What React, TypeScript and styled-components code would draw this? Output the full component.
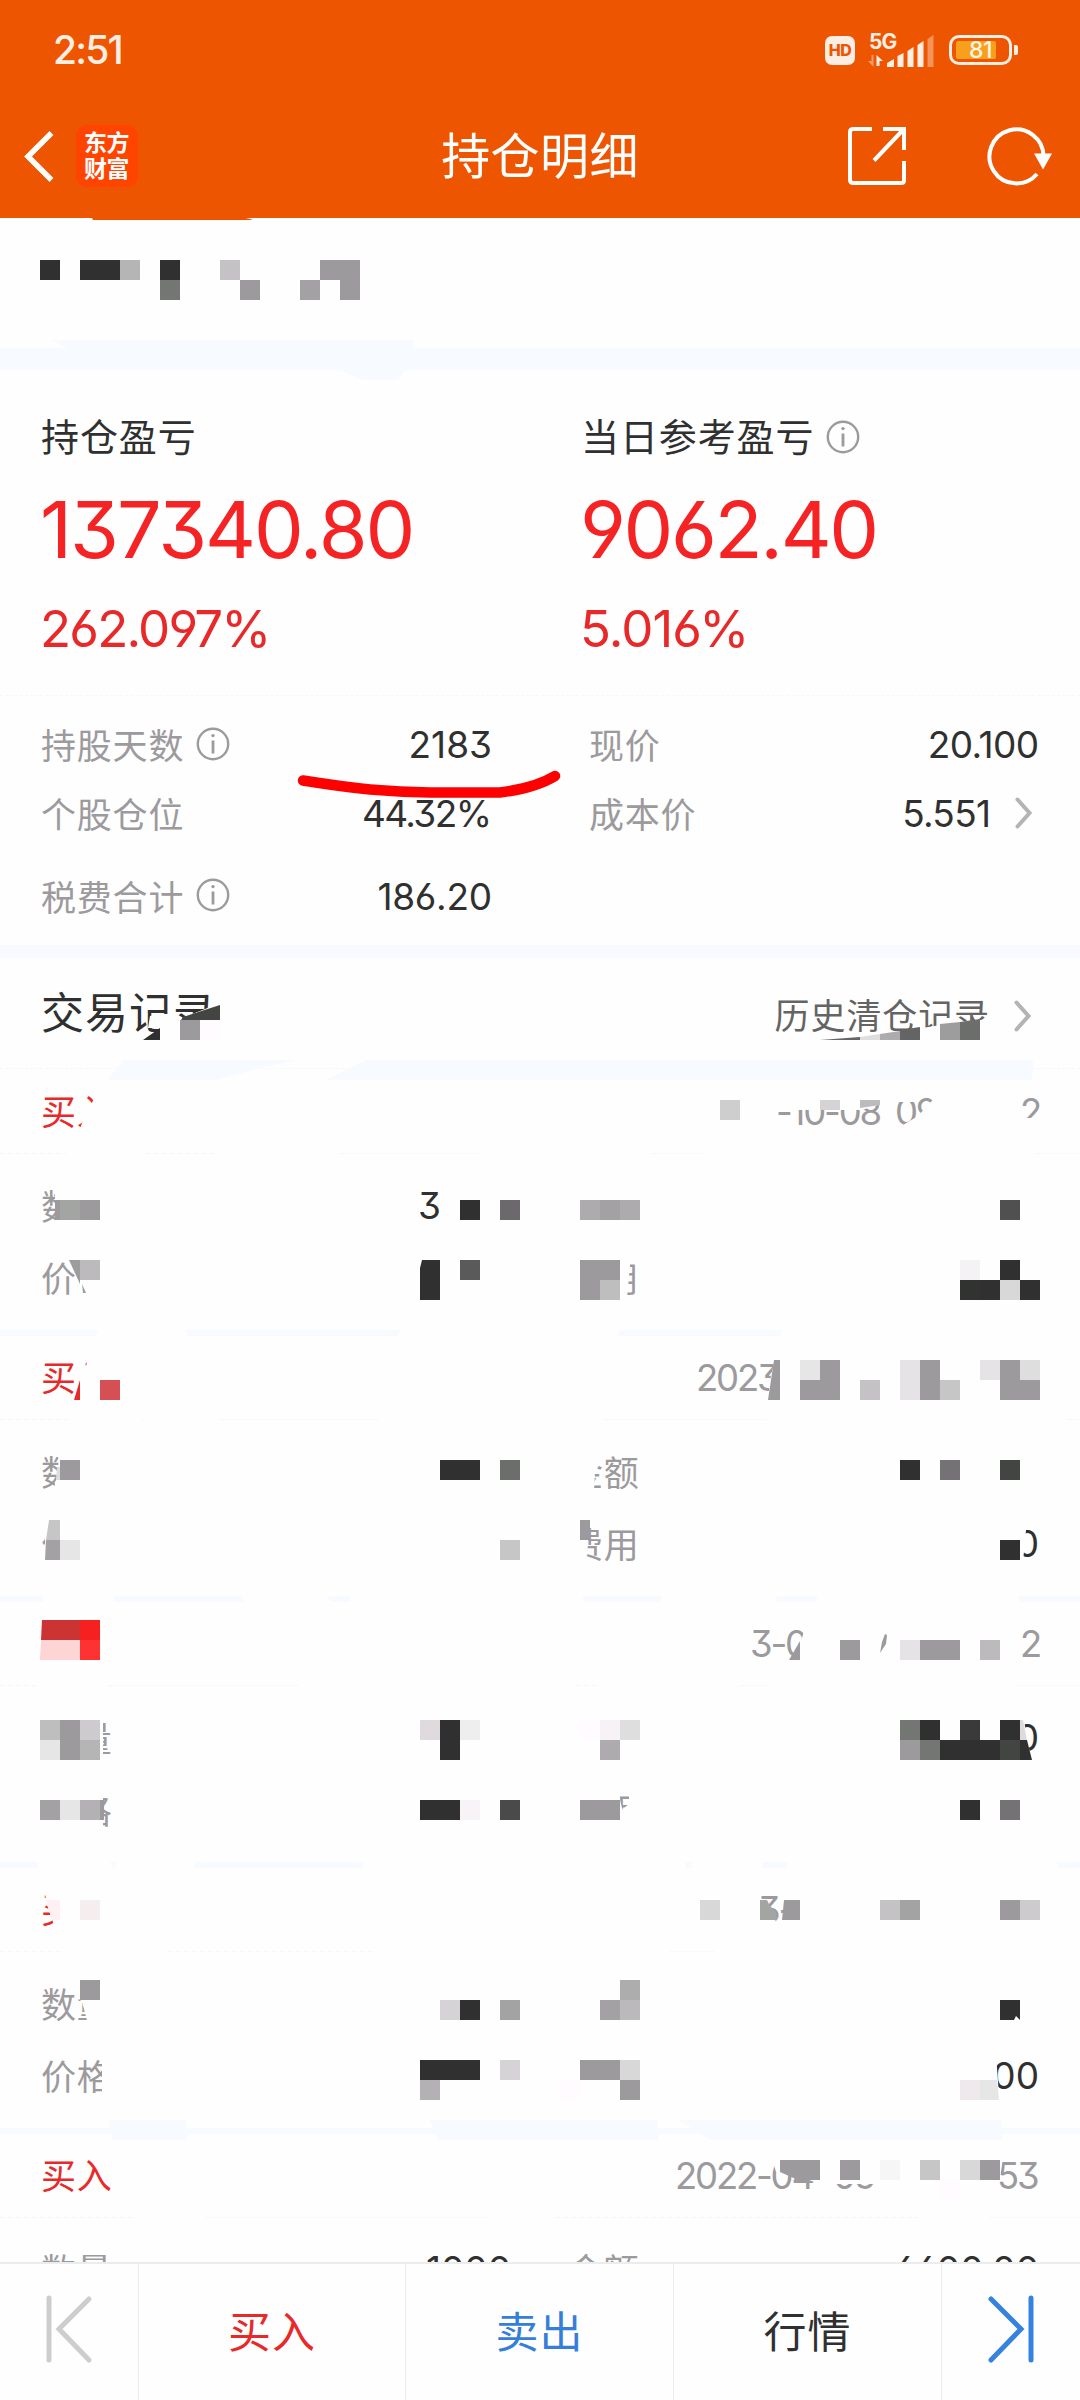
import React from "react";
import styled, { createGlobalStyle } from "styled-components";

const GREY = "#9c9a9d";
const INK = "#303030";
const RED = "#e8292a";
const PAPER = "#fefefe";
const MIST = "#f7faff";

const GlobalStyle = createGlobalStyle`
  * { box-sizing: border-box; }
  body { margin: 0; background: ${PAPER}; }
`;

const Screen = styled.div`
  display: flex;
  flex-direction: column;
  width: 1080px;
  height: 2400px;
  overflow: hidden;
  background: ${PAPER};
  color: ${INK};
  font-family: Inter, "Noto Sans CJK SC", sans-serif;
  font-feature-settings: "cv03", "cv04", "cv09";
`;

/* ---------- header ---------- */

const Header = styled.header`
  flex: none;
  height: 218px;
  background: #ed5500;
  color: #fff;
`;

const StatusBar = styled.div`
  display: flex;
  align-items: center;
  justify-content: space-between;
  height: 100px;
  padding: 0 62px 0 53px;
`;

const Clock = styled.span`
  font-size: 39px;
  line-height: 48px;
  font-weight: 500;
  letter-spacing: -1.8px;
  color: #fdeee4;
`;

const StatusIcons = styled.div`
  display: flex;
  align-items: center;
  gap: 13px;
`;

const HdBadge = styled.span`
  width: 30px;
  height: 29px;
  border-radius: 7px;
  background: #fdeee4;
  color: #ed5500;
  font-size: 16px;
  line-height: 29px;
  font-weight: 800;
  letter-spacing: -0.5px;
  text-align: center;
`;

const Signal = styled.div`
  display: flex;
  flex-direction: column;
  width: 68px;
  height: 34px;
  position: relative;
  color: #fdeee4;
`;

const Network = styled.span`
  padding-left: 1px;
  font-size: 21px;
  line-height: 17px;
  font-weight: 700;
  letter-spacing: -0.8px;
`;

const Bars = styled.svg`
  position: absolute;
  left: 0;
  top: 0;
`;

const Battery = styled.div`
  position: relative;
  display: flex;
  width: 63px;
  height: 30px;
  padding: 3px 4px;
  margin-right: 6px;
  border: 3px solid #fdeee4;
  border-radius: 10px;
  &::after {
    content: "";
    position: absolute;
    right: -9px;
    top: 7px;
    width: 4px;
    height: 10px;
    border-radius: 0 2px 2px 0;
    background: #fdeee4;
  }
`;

const Charge = styled.span`
  width: 40px;
  padding-left: 13px;
  border-radius: 2px;
  background: #f8a01c;
  color: #fff5e8;
  font-size: 23px;
  line-height: 19px;
  font-weight: 500;
  letter-spacing: -0.6px;
`;

const TitleBar = styled.div`
  display: grid;
  grid-template-columns: 1fr auto 1fr;
  align-items: center;
  height: 112px;
`;

const TitleLeft = styled.div`
  display: flex;
  align-items: center;
  gap: 19px;
  padding: 0 0 1px 21px;
`;

const TitleRight = styled.div`
  display: flex;
  align-items: center;
  justify-content: flex-end;
  gap: 80px;
  padding: 0 27px 1px 0;
`;

const Logo = styled.div`
  width: 62px;
  height: 62px;
  padding: 5px 0 0 8px;
  border-radius: 11px;
  background: #ff4400;
  font-size: 23px;
  line-height: 26px;
  font-weight: 700;
  letter-spacing: -0.5px;
`;

const Title = styled.h1`
  margin: 0;
  padding-top: 1px;
  font-size: 49px;
  line-height: 60px;
  font-weight: 400;
  letter-spacing: 0.4px;
`;

/* ---------- summary ---------- */

const Section = styled.section<{ $h: number; $pad?: number }>`
  position: relative;
  flex: none;
  height: ${(p) => p.$h}px;
  padding-top: ${(p) => p.$pad ?? 0}px;
`;

const Divider = styled.div<{ $h: number }>`
  flex: none;
  height: ${(p) => p.$h}px;
  background: ${MIST};
`;

const Overlay = styled.svg`
  position: absolute;
  left: 0;
  top: 0;
  overflow: visible;
  pointer-events: none;
`;

const ProfitGrid = styled.div`
  display: grid;
  grid-template-columns: 540px 1fr;
  height: 100%;
  padding: 43px 0 0 41px;
  border-bottom: 1px dashed #f7f7f7;
`;

const ProfitLabel = styled.div`
  display: flex;
  align-items: center;
  gap: 12px;
  height: 48px;
  font-size: 38px;
  line-height: 48px;
  letter-spacing: 0.9px;
`;

const Profit = styled.div<{ $ls: number }>`
  margin: 22px 0 0 -1px;
  font-size: 79px;
  line-height: 92px;
  letter-spacing: ${(p) => p.$ls}px;
  color: #f52323;
`;

const Percent = styled.div<{ $ls: number }>`
  margin: 23px 0 0 -1px;
  font-size: 51px;
  line-height: 61px;
  letter-spacing: ${(p) => p.$ls}px;
  color: ${RED};
`;

const FactRow = styled.div<{ $h: number }>`
  display: grid;
  grid-template-columns: 451px 97px 1fr;
  align-items: center;
  height: ${(p) => p.$h}px;
  padding: 0 41px;
  font-size: 37px;
`;

const Fact = styled.div<{ $wide?: boolean }>`
  display: flex;
  align-items: center;
  justify-content: space-between;
  grid-column: ${(p) => (p.$wide ? "3" : "1")};
`;

const FactLabel = styled.span`
  display: flex;
  align-items: center;
  gap: 12px;
  padding-bottom: 2px;
  font-size: 35px;
  letter-spacing: 0.8px;
  color: ${GREY};
`;

const Value = styled.span<{ $ls?: number }>`
  display: flex;
  align-items: center;
  letter-spacing: ${(p) => p.$ls ?? 0}px;
  margin-right: ${(p) => -(p.$ls ?? 0)}px;
`;

const Linked = styled.span`
  display: flex;
  align-items: center;
  gap: 24px;
  padding-right: 7px;
`;

/* ---------- records ---------- */

const RecordsHead = styled.div`
  display: flex;
  align-items: center;
  justify-content: space-between;
  height: 111px;
  padding: 0 49px 0 41px;
  border-bottom: 1px dashed #f7f7f7;
`;

const RecordsTitle = styled.h2`
  margin: 0;
  font-size: 43px;
  line-height: 50px;
  font-weight: 400;
  letter-spacing: 1px;
`;

const HistoryLink = styled.span`
  display: flex;
  align-items: center;
  gap: 24px;
  padding-top: 6px;
  font-size: 35px;
  line-height: 44px;
  letter-spacing: 0.9px;
  color: #646464;
`;

const RecordTop = styled.div`
  display: flex;
  align-items: center;
  justify-content: space-between;
  height: 89px;
  padding: 6px 41px 0;
`;

const Side = styled.span`
  padding-bottom: 4px;
  font-size: 35px;
  letter-spacing: 0.8px;
  color: ${RED};
`;

const Stamp = styled.span`
  display: flex;
  margin-left: auto;
  font-size: 36.5px;
  letter-spacing: -2.2px;
  color: ${GREY};
`;

const StampPart = styled.span<{ $w: number }>`
  width: ${(p) => p.$w}px;
  white-space: pre;
`;

const RecordRow = styled.div`
  display: grid;
  grid-template-columns: 470px 57px 1fr;
  align-items: center;
  height: 71.5px;
  padding: 0 41px;
  font-size: 37px;
`;

const RecordBody = styled.div`
  padding-top: 17px;
`;

const RecordsViewport = styled.div`
  flex: 1;
  min-height: 0;
  overflow: hidden;
`;

/* ---------- bottom bar ---------- */

const BottomBar = styled.nav`
  display: grid;
  grid-template-columns: 139px 267px 268px 268px 1fr;
  flex: none;
  height: 138px;
  border-top: 2px solid #ececec;
`;

const BarItem = styled.div<{ $color?: string }>`
  display: flex;
  align-items: center;
  justify-content: center;
  padding-bottom: 6px;
  font-size: 43px;
  letter-spacing: 1px;
  color: ${(p) => p.$color ?? INK};
  border-right: 1px solid #ececec;
  &:last-child {
    border-right: 0;
  }
`;

/* ---------- icons ---------- */

const Info = () => (
  <svg width="34" height="34" viewBox="0 0 34 34" fill="none" stroke={GREY} strokeWidth="2.4">
    <circle cx="17" cy="17" r="15.2" />
    <path d="M17 13.5v13" strokeWidth="2.8" />
    <circle cx="17" cy="8.6" r="1.7" fill={GREY} stroke="none" />
  </svg>
);

const Chevron = () => (
  <svg width="17" height="32" viewBox="0 0 17 32" fill="none" stroke="#b5b3b6" strokeWidth="4" strokeLinecap="round">
    <path d="M2.500 2.500L14.500 16L2.500 29.500" />
  </svg>
);

/* ---------- mosaic ---------- */

type Cell = [x: number, y: number, w: number, h: number, color: string];
type Shape = [points: string, color: string];

const Mosaic = ({
  top,
  height,
  masks = [],
  cells = [],
  shapes = [],
  dash,
  dashY = 0,
}: {
  top: number;
  height: number;
  masks?: string[];
  cells?: Cell[];
  shapes?: Shape[];
  dash?: [number, number][];
  dashY?: number;
}) => (
  <Overlay width="1080" height={height} viewBox={`0 ${top} 1080 ${height}`}>
    {dash?.map(([a, b]) => (
      <path key={a} d={`M${a} ${dashY + 0.5}H${b}`} stroke="#f7f7f7" strokeDasharray="6 2" />
    ))}
    {masks.map((m) => (
      <polygon key={m} points={m} fill={PAPER} />
    ))}
    <g shapeRendering="crispEdges">
      {cells.map(([x, y, w, h, c]) => (
        <rect key={`${x}-${y}`} x={x} y={y} width={w} height={h} fill={c} />
      ))}
    </g>
    {shapes.map(([p, c]) => (
      <polygon key={p} points={p} fill={c} />
    ))}
  </Overlay>
);

type Row = { a?: string; av?: string; b?: string; bv?: string };
type RecordData = {
  top: number;
  side?: string;
  stamp: [text: string, width: number][];
  rows: Row[];
  masks?: string[];
  cells?: Cell[];
  shapes?: Shape[];
  dash: [number, number][];
};

const records: RecordData[] = [
  {
    top: 1064,
    side: "买入",
    stamp: [["-10-08", 119], ["09", 125], ["2", 19]],
    rows: [
      { a: "数", av: "3000" },
      { a: "价格", b: "费用" },
    ],
    masks: [
      "97,1090 120,1090 120,1136 77,1136 84,1118 84,1103 92,1103",
      "770,1092 890,1092 890,1101 862,1110 770,1110",
      "890,1092 918,1092 918,1102 890,1102",
      "895,1130 908,1122 918,1116 940,1092 945,1092 945,1132 895,1132",
      "1016,1118 1042,1118 1042,1132 1016,1132",
      "55,1185 112,1185 112,1232 55,1232",
      "440,1185 520,1185 520,1230 436,1230 440,1208",
      "69,1258 112,1258 112,1298 78,1298 78,1285",
      "560,1255 631,1255 627,1298 560,1298",
      "636,1255 644,1255 644,1298 636,1298",
    ],
    cells: [
      [720, 1100, 20, 20, "#cecece"],
      [820, 1100, 20, 10, "#d5d3d6"],
      [55, 1200, 5, 20, GREY],
      [60, 1200, 20, 20, "#a3a5a3"],
      [80, 1200, 20, 20, GREY],
      [460, 1200, 20, 20, INK],
      [500, 1200, 20, 20, "#6c696d"],
      [580, 1200, 20, 20, "#adabae"],
      [600, 1200, 20, 20, "#a3a1a4"],
      [620, 1200, 20, 20, "#adabae"],
      [1000, 1200, 20, 20, "#505050"],
      [80, 1260, 20, 20, "#bcbabd"],
      [460, 1260, 20, 20, "#5a5a5a"],
      [580, 1260, 40, 40, GREY],
      [600, 1280, 20, 20, "#bebebe"],
      [960, 1260, 20, 20, "#f5f2f6"],
      [1000, 1260, 20, 20, INK],
      [960, 1280, 20, 20, "#30332f"],
      [980, 1280, 20, 20, INK],
      [1000, 1280, 20, 20, "#d8d8d8"],
      [1020, 1280, 20, 20, INK],
    ],
    shapes: [
      ["860,1100 880,1100 880,1105 860,1108", "#bcbcbc"],
      ["69,1260 80,1260 80,1284", "#9c9d9c"],
      ["82,1284 86,1293 83,1293", GREY],
      ["422,1260 440,1260 440,1300 420,1300 420,1268", INK],
      ["108,1080 123,1060 296,1060 257,1069 216,1080", MIST],
      ["326,1080 366,1060 1033,1060 1033,1073 1031,1080", MIST],
    ],
    dash: [[0, 66], [145, 217], [340, 480], [651, 705], [1036, 1080]],
  },
  {
    top: 1330,
    side: "买",
    stamp: [["2023", 343]],
    rows: [
      { a: "数", b: "金额" },
      { a: "价", b: "费用", bv: "0" },
    ],
    masks: [
      "59,1450 80,1450 80,1492 53,1492 58,1472",
      "560,1450 604,1450 600,1464 595,1472 594,1492 560,1492",
      "48,1520 82,1520 82,1562 45,1562 45,1538",
      "560,1520 589,1520 588,1545 586,1562 560,1562",
      "1012,1520 1027,1520 1023,1562 1012,1562",
      "776,1355 800,1355 800,1402 768,1402 770,1380",
    ],
    cells: [
      [100, 1380, 20, 20, "#d55054"],
      [800, 1360, 20, 20, "#e6e6e6"],
      [820, 1360, 20, 20, GREY],
      [800, 1380, 40, 20, GREY],
      [860, 1380, 20, 20, "#c4c2c5"],
      [900, 1360, 20, 40, "#e6e3e7"],
      [920, 1360, 20, 40, GREY],
      [940, 1380, 20, 20, "#c6c6c6"],
      [980, 1360, 20, 20, "#e6e3e7"],
      [1000, 1360, 20, 40, GREY],
      [1020, 1360, 20, 20, "#dedede"],
      [1020, 1380, 20, 20, GREY],
      [60, 1460, 20, 20, GREY],
      [440, 1460, 40, 20, INK],
      [500, 1460, 20, 20, "#6c6e6b"],
      [900, 1460, 20, 20, INK],
      [940, 1460, 20, 20, "#757276"],
      [1000, 1460, 20, 20, "#424542"],
      [60, 1540, 20, 20, "#e6e6e6"],
      [500, 1540, 20, 20, "#c6c6c6"],
      [580, 1520, 10, 20, GREY],
      [1000, 1540, 20, 20, INK],
    ],
    shapes: [
      ["80,1380 80,1400 74,1400", RED],
      ["85,1364 87,1362 87,1364 86,1366", "#d98a8a"],
      ["774,1360 780,1360 780,1400 768,1400", GREY],
      ["56,1480 57,1467 60,1467 60,1480", "#dddddd"],
      ["49,1520 60,1520 60,1540 46,1540", "#c6c6c6"],
      ["46,1540 60,1540 60,1560 45,1560", "#a3a1a4"],
      ["0,1330 98,1330 96,1336 0,1336", MIST],
      ["185,1330 401,1330 398,1336 188,1336", MIST],
      ["619,1330 782,1330 780,1336 618,1336", MIST],
    ],
    dash: [[0, 68], [142, 145], [220, 379], [604, 766], [1067, 1080]],
  },
  {
    top: 1596,
    stamp: [["3-0", 270], ["2", 19]],
    rows: [
      { a: "数量", bv: "0" },
      { a: "价格", b: "费用" },
    ],
    masks: [
      "806,1625 795,1660 820,1660 820,1625",
      "40,1715 103,1715 103,1765 40,1765",
      "40,1788 103,1788 103,1835 40,1835",
      "560,1788 620,1788 620,1800 622,1808 626,1815 640,1815 640,1835 560,1835",
      "629,1788 642,1788 642,1830 624,1830 624,1808 629,1804",
      "1010,1715 1023,1715 1032,1765 1010,1765",
    ],
    cells: [
      [80, 1620, 20, 20, "#f72020"],
      [80, 1640, 20, 20, "#ff3233"],
      [840, 1640, 20, 20, GREY],
      [900, 1640, 20, 20, "#e6e3e7"],
      [920, 1640, 40, 20, GREY],
      [980, 1640, 20, 20, "#bcbabd"],
      [40, 1720, 20, 20, "#bebebe"],
      [60, 1720, 20, 40, GREY],
      [80, 1720, 20, 20, "#cdcbce"],
      [40, 1740, 20, 20, "#e6e6e6"],
      [80, 1740, 20, 20, "#b5b5b5"],
      [420, 1720, 20, 20, "#dedade"],
      [440, 1720, 20, 40, INK],
      [460, 1720, 20, 20, "#eeeeee"],
      [580, 1720, 20, 20, "#fffbff"],
      [600, 1720, 20, 20, "#f6f2f6"],
      [620, 1720, 20, 20, "#dedede"],
      [600, 1740, 20, 20, "#adabae"],
      [900, 1720, 20, 20, "#737673"],
      [920, 1720, 20, 20, INK],
      [960, 1720, 20, 20, "#3a3a3a"],
      [1000, 1720, 20, 20, INK],
      [900, 1740, 20, 20, GREY],
      [920, 1740, 20, 20, "#737673"],
      [940, 1740, 60, 20, INK],
      [1000, 1740, 20, 20, "#424542"],
      [40, 1800, 20, 20, "#a3a1a4"],
      [60, 1800, 20, 20, "#e6e6e6"],
      [80, 1800, 20, 20, "#b3b1b4"],
      [100, 1800, 4, 20, GREY],
      [420, 1800, 40, 20, INK],
      [460, 1800, 20, 20, "#f7f3f7"],
      [500, 1800, 20, 20, "#4a4a4a"],
      [580, 1800, 40, 20, GREY],
      [960, 1800, 20, 20, INK],
      [1000, 1800, 20, 20, "#757276"],
    ],
    shapes: [
      ["42,1620 80,1620 80,1640 41,1640", "#cc3333"],
      ["41,1640 80,1640 80,1660 40,1660", "#fed5d5"],
      ["800,1641 800,1660 789,1660", GREY],
      ["885,1634 887,1635 886,1644 880,1653 882,1642", GREY],
      ["1020,1720 1023,1720 1027,1740 1020,1740", "#dedade"],
      ["1020,1740 1027,1740 1032,1760 1020,1760", INK],
      ["0,1596 43,1596 43,1602 0,1602", MIST],
      ["114,1596 241,1596 245,1602 114,1602", MIST],
      ["327,1596 350,1596 350,1602 331,1602", MIST],
      ["583,1596 662,1596 659,1602 583,1602", MIST],
      ["777,1596 817,1596 817,1602 775,1602", MIST],
      ["1019,1596 1080,1596 1080,1602 1019,1602", MIST],
    ],
    dash: [[0, 36], [108, 298], [576, 600], [739, 771], [1015, 1080]],
  },
  {
    top: 1862,
    side: "买",
    stamp: [["3-", 281]],
    rows: [
      { a: "数量" },
      { a: "价格", bv: "00" },
    ],
    masks: [
      "45,1890 80,1890 80,1930 53,1930 53,1922 46,1902",
      "112,1980 112,2024 88,2024 82,2002 78,1998 78,1980",
      "102,2055 114,2055 114,2098 102,2098",
      "990,2055 996,2055 999,2095 990,2095",
      "756,1900 765,1900 774,1912 777,1930 756,1930",
    ],
    cells: [
      [80, 1900, 20, 20, "#f6edef"],
      [700, 1900, 20, 20, "#d8d8d8"],
      [880, 1900, 20, 20, "#c4c2c5"],
      [900, 1900, 20, 20, "#a3a3a3"],
      [1000, 1900, 20, 20, GREY],
      [1020, 1900, 20, 20, "#cdcbce"],
      [80, 1980, 20, 20, GREY],
      [440, 2000, 20, 20, "#d5d3d6"],
      [460, 2000, 20, 20, INK],
      [500, 2000, 20, 20, "#a3a3a3"],
      [620, 1980, 20, 20, "#adadad"],
      [600, 2000, 20, 20, "#a3a1a4"],
      [620, 2000, 20, 20, "#bbb9bc"],
      [420, 2060, 60, 20, INK],
      [500, 2060, 20, 20, "#d5d3d6"],
      [420, 2080, 20, 20, "#b3b1b4"],
      [580, 2060, 40, 20, GREY],
      [620, 2060, 20, 20, "#d8d8d8"],
      [560, 2080, 20, 20, "#fffbff"],
      [620, 2080, 20, 20, GREY],
      [960, 2080, 20, 20, "#efe9ee"],
    ],
    shapes: [
      ["46,1900 60,1900 60,1920 52,1920", "#fff0f4"],
      ["760,1900 767,1900 770,1906 776,1912 777,1920 760,1920", "#a3a5a3"],
      ["784,1900 800,1900 800,1920 782,1920", GREY],
      ["1000,2000 1020,2000 1020,2020 1016,2016 1014,2020 1000,2020", INK],
      ["980,2080 997,2080 999,2100 980,2100", "#e6e6e6"],
      ["0,1862 38,1862 39,1868 0,1868", MIST],
      ["110,1862 117,1862 115,1868 112,1868", MIST],
      ["196,1862 363,1862 363,1868 193,1868", MIST],
      ["686,1862 692,1862 692,1868 685,1868", MIST],
      ["762,1862 787,1862 787,1868 763,1868", MIST],
      ["1057,1862 1080,1862 1080,1868 1058,1868", MIST],
    ],
    dash: [[0, 62], [168, 377], [670, 714]],
  },
  {
    top: 2128,
    side: "买入",
    stamp: [["2022-04", 158], ["05", 164], ["53", 42]],
    rows: [{ a: "数量", av: "1000", b: "金额", bv: "6600.00" }],
    masks: [
      "772,2158 820,2158 820,2184 798,2176 776,2172",
      "820,2158 880,2158 880,2184 820,2184",
      "994,2158 1003,2158 1000,2178 994,2178",
    ],
    cells: [
      [840, 2160, 20, 20, GREY],
      [880, 2160, 20, 20, "#f6f6f6"],
      [920, 2160, 20, 20, "#c6c6c6"],
      [960, 2160, 20, 20, "#d8d8d8"],
      [980, 2160, 20, 20, GREY],
      [940, 2180, 20, 20, "#fffbff"],
    ],
    shapes: [
      ["780,2160 820,2160 820,2180 798,2180 780,2172", GREY],
      ["0,2128 1080,2128 1080,2134 0,2134", MIST],
      ["108,2120 186,2120 187,2140 112,2140", MIST],
      ["430,2120 657,2120 659,2140 438,2140", MIST],
      ["679,2120 1001,2120 1002,2140 710,2140", MIST],
    ],
    dash: [[0, 136], [206, 488], [554, 918], [990, 1080]],
  },
];

const Trade = ({ r }: { r: RecordData }) => (
  <Section $h={266}>
    <RecordTop>
      {r.side && <Side>{r.side}</Side>}
      <Stamp>
        {r.stamp.map(([t, w]) => (
          <StampPart key={t} $w={w}>{t}</StampPart>
        ))}
      </Stamp>
    </RecordTop>
    <RecordBody>
      {r.rows.map((row, i) => (
        <RecordRow key={i}>
          <Fact>
            <FactLabel>{row.a}</FactLabel>
            <Value>{row.av}</Value>
          </Fact>
          <Fact $wide>
            <FactLabel>{row.b}</FactLabel>
            <Value>{row.bv}</Value>
          </Fact>
        </RecordRow>
      ))}
    </RecordBody>
    <Mosaic top={r.top} height={266} masks={r.masks} cells={r.cells} shapes={r.shapes} dash={r.dash} dashY={r.top + 89} />
  </Section>
);

export default function App() {
  return (
    <Screen>
      <GlobalStyle />
      <Header>
        <StatusBar>
          <Clock>2:51</Clock>
          <StatusIcons>
            <HdBadge>HD</HdBadge>
            <Signal>
              <Network>5G</Network>
              <Bars width="68" height="34" viewBox="0 0 68 34" fill="#fdeee4">
                <path d="M5.500 22v12L0 28h3.500V22z" opacity=".45" />
                <path d="M8.500 33V22l6.500 6H11.500v5z" />
                <path d="M19 34v-4l7-4v8zM29.500 34V23l6-3v14zM39.500 34V18l6-4v20zM49.500 34V12l6-4v26z" />
                <path d="M59.500 34V6l6-4v32z" opacity=".4" />
              </Bars>
            </Signal>
            <Battery>
              <Charge>81</Charge>
            </Battery>
          </StatusIcons>
        </StatusBar>
        <TitleBar>
          <TitleLeft>
            <svg width="36" height="54" viewBox="0 0 36 54" fill="none" stroke="#fff" strokeWidth="5.500">
              <path d="M30.500 4L7 27.500L30.500 51" />
            </svg>
            <Logo>
              东方
              <br />
              财富
            </Logo>
          </TitleLeft>
          <Title>持仓明细</Title>
          <TitleRight>
            <svg width="60" height="60" viewBox="0 0 60 60" fill="none" stroke="#fff" strokeWidth="4">
              <path d="M25 3H6.500Q3 3 3 6V54Q3 57 6.500 57H54Q57 57 57 54.500V35" />
              <path d="M36 3H57V24M56 4L27 34.500" />
            </svg>
            <svg width="66" height="60" viewBox="0 0 66 60" fill="none" stroke="#fff" strokeWidth="4">
              <path d="M56.500 30.500A27 27 0 1 0 50 48" />
              <path d="M47 27.500H65L56 43.500z" fill="#fff" stroke="none" />
            </svg>
          </TitleRight>
        </TitleBar>
      </Header>

      <Section $h={130}>
        <Mosaic
          top={218}
          height={130}
          cells={[
            [40, 260, 20, 20, INK],
            [80, 260, 40, 20, INK],
            [120, 260, 20, 20, "#b5b5b5"],
            [160, 260, 20, 20, INK],
            [160, 280, 20, 20, "#737673"],
            [220, 260, 20, 20, "#c4c2c5"],
            [240, 280, 20, 20, GREY],
            [300, 280, 20, 20, "#a3a1a4"],
            [320, 260, 40, 20, GREY],
            [340, 280, 20, 20, GREY],
          ]}
          shapes={[
            ["92,218 250,218 246,219 253,219 250,220 93,220", "#ed5500"],
            ["51,340 413,340 413,348 68,348", MIST],
          ]}
        />
      </Section>
      <Divider $h={22} />

      <Section $h={326}>
        <ProfitGrid>
          <div>
            <ProfitLabel>持仓盈亏</ProfitLabel>
            <Profit $ls={-2.1}>137340.80</Profit>
            <Percent $ls={-1.8}>262.097%</Percent>
          </div>
          <div>
            <ProfitLabel>
              当日参考盈亏 <Info />
            </ProfitLabel>
            <Profit $ls={-2.4}>9062.40</Profit>
            <Percent $ls={-0.9}>5.016%</Percent>
          </div>
        </ProfitGrid>
        <Mosaic top={370} height={326} shapes={[["340,370 405,370 401,376 397,380 363,380", MIST]]} />
      </Section>

      <Section $h={249} $pad={14}>
        <FactRow $h={69}>
          <Fact>
            <FactLabel>持股天数 <Info /></FactLabel>
            <Value $ls={0}>2183</Value>
          </Fact>
          <Fact $wide>
            <FactLabel>现价</FactLabel>
            <Value $ls={-0.6}>20.100</Value>
          </Fact>
        </FactRow>
        <FactRow $h={68}>
          <Fact>
            <FactLabel>个股仓位</FactLabel>
            <Value $ls={-1.6}>44.32%</Value>
          </Fact>
          <Fact $wide>
            <FactLabel>成本价</FactLabel>
            <Linked>
              <Value $ls={-0.7}>5.551</Value>
              <Chevron />
            </Linked>
          </Fact>
        </FactRow>
        <FactRow $h={98}>
          <Fact>
            <FactLabel>税费合计 <Info /></FactLabel>
            <Value $ls={-0.3}>186.20</Value>
          </Fact>
        </FactRow>
        <Overlay width="1080" height="249" viewBox="0 696 1080 249">
          <path
            d="M303 780.500C325 784 350 787.500 370 789.500Q400 792 430 792.500H500C520 790 542 784 555 776"
            fill="none"
            stroke="#fe0000"
            strokeWidth="10.500"
            strokeLinecap="round"
          />
        </Overlay>
      </Section>
      <Divider $h={13} />

      <RecordsViewport>
        <Section $h={106}>
          <RecordsHead>
            <RecordsTitle>交易记录</RecordsTitle>
            <HistoryLink>
              历史清仓记录 <Chevron />
            </HistoryLink>
          </RecordsHead>
          <Mosaic
            top={958}
            height={106}
            masks={[
              "160,1014 175,1014 175,1021 220,1003 220,1045 160,1045 160,1028 148,1028 150,1016",
              "820,1039 890,1033 960,1022 990,1019 990,1045 820,1045",
            ]}
            cells={[
              [180, 1020, 20, 20, GREY],
              [200, 1020, 20, 20, "#fffbff"],
            ]}
            shapes={[
              ["143,1040 160,1028 160,1040", INK],
              ["181,1020 183,1017 220,1005 220,1020", "#424542"],
              ["860,1037 860,1040 820,1040", "#646464"],
              ["860,1037 880,1034 880,1040 860,1040", "#dedede"],
              ["880,1034 900,1031 900,1040 880,1040", "#adabae"],
              ["900,1030 920,1027 920,1040 900,1040", "#646464"],
              ["940,1024 960,1022 960,1040 940,1040", "#9c9d9c"],
              ["960,1022 980,1019 980,1040 960,1040", "#6b6e6b"],
            ]}
          />
        </Section>
        {records.map((r) => (
          <Trade key={r.top} r={r} />
        ))}
      </RecordsViewport>

      <BottomBar>
        <BarItem>
          <svg width="50" height="70" viewBox="0 0 50 70" fill="none" stroke="#cdcdcd" strokeWidth="5" strokeLinecap="round">
            <path d="M5 4V66M45 5L15 35L45 66" />
          </svg>
        </BarItem>
        <BarItem $color={RED}>买入</BarItem>
        <BarItem $color="#367fd9">卖出</BarItem>
        <BarItem>行情</BarItem>
        <BarItem>
          <svg width="50" height="70" viewBox="0 0 50 70" fill="none" stroke="#3682df" strokeWidth="5" strokeLinecap="round">
            <path d="M45 4V66M5 5L35 35L5 66" />
          </svg>
        </BarItem>
      </BottomBar>
    </Screen>
  );
}
